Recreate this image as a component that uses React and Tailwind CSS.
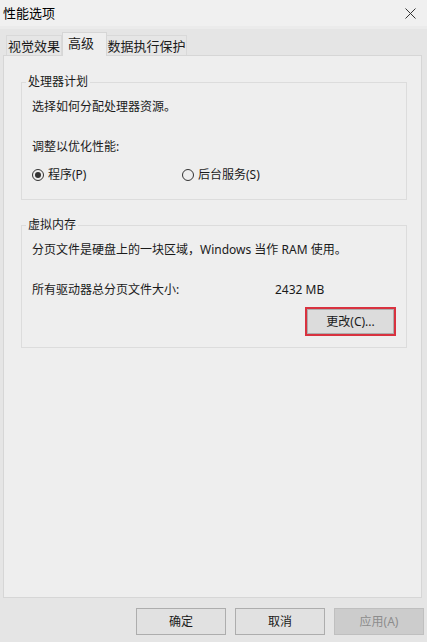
export default function App() {
  const tabs = [
    { label: '视觉效果', active: false, w: 'w-[56px]' },
    { label: '高级', active: true, w: 'w-[45px]' },
    { label: '数据执行保护', active: false, w: 'w-[81px]' },
  ];

  return (
    <div className="w-[427px] h-[642px] bg-[#e5e5e5] flex flex-col text-[12px] leading-[16px] text-[#1a1a1a] font-['Noto_Sans','Noto_Sans_CJK_SC',sans-serif] overflow-hidden">
      {/* title bar */}
      <div className="h-[26px] bg-[#f0f0f0] flex items-center justify-between pl-[3px] pr-[11px] shrink-0">
        <span className="text-[13px] text-black">性能选项</span>
        <svg width="11" height="11" viewBox="0 0 11 11" className="text-[#333]">
          <path d="M0.5 0.5L10.5 10.5M10.5 0.5L0.5 10.5" stroke="currentColor" strokeWidth="1" />
        </svg>
      </div>
      <div className="h-[3px] bg-[#ebebeb] shrink-0" />

      {/* tabs */}
      <div className="flex items-end pl-[6px] pt-[4px] h-[26px] shrink-0">
        {tabs.map(t =>
          t.active ? (
            <div key={t.label}
              className={`${t.w} h-[24px] -mb-px relative z-10 bg-[#eeeeee] border border-b-0 border-[#d6d6d6] flex items-start justify-start pl-[5px] pt-[2px] text-[13px]`}>
              {t.label}
            </div>
          ) : (
            <div key={t.label}
              className={`${t.w} h-[20px] bg-[#e6e6e6] border border-b-0 border-[#d9d9d9] flex items-center justify-center text-[13px] -ml-px first:ml-0`}>
              {t.label}
            </div>
          )
        )}
      </div>

      {/* panel */}
      <div className="ml-[3px] w-[419px] h-[543px] bg-[#eeeeee] border border-[#d6d6d6] pt-[26px] pl-[17px] pr-[14px] shrink-0">
        <div className="relative border border-[#dcdcdc] pl-[10px] pt-[16px] pb-[16px]">
          <span className="absolute -top-[9px] left-[4px] px-[2px] bg-[#eeeeee]">处理器计划</span>
          <div>选择如何分配处理器资源。</div>
          <div className="mt-[24px]">调整以优化性能:</div>
          <div className="mt-[12px] flex items-center">
            <label className="w-[150px] flex items-center gap-[4px]">
              <span className="w-[12px] h-[12px] rounded-full border border-[#333] flex items-center justify-center">
                <span className="w-[6px] h-[6px] rounded-full bg-[#333]" />
              </span>
              程序(P)
            </label>
            <label className="flex items-center gap-[4px]">
              <span className="w-[12px] h-[12px] rounded-full border border-[#333]" />
              后台服务(S)
            </label>
          </div>
        </div>

        <div className="relative mt-[25px] border border-[#dcdcdc] pl-[10px] pr-[10px] pt-[16px] pb-[11px]">
          <span className="absolute -top-[9px] left-[4px] px-[2px] bg-[#eeeeee]">虚拟内存</span>
          <div>分页文件是硬盘上的一块区域，Windows 当作 RAM 使用。</div>
          <div className="mt-[24px] flex">
            <span className="w-[243px]">所有驱动器总分页文件大小:</span>
            <span>2432 MB</span>
          </div>
          <div className="mt-[9px] flex justify-end">
            <button className="w-[91px] h-[29px] border-2 border-[#d8323f] bg-[#dcdcdc] flex items-center justify-center">
              <span className="w-full h-full border border-[#adadad] flex items-center justify-center">更改(C)...</span>
            </button>
          </div>
        </div>
      </div>

      {/* bottom buttons */}
      <div className="flex justify-end gap-[9px] pr-[3px] pt-[10px]">
        <button className="w-[90px] h-[27px] bg-[#e1e1e1] border border-[#adadad]">确定</button>
        <button className="w-[90px] h-[27px] bg-[#e1e1e1] border border-[#adadad]">取消</button>
        <button className="w-[90px] h-[27px] bg-[#cccccc] border border-[#bfbfbf] text-[#8c8c8c]">应用(A)</button>
      </div>
    </div>
  );
}
